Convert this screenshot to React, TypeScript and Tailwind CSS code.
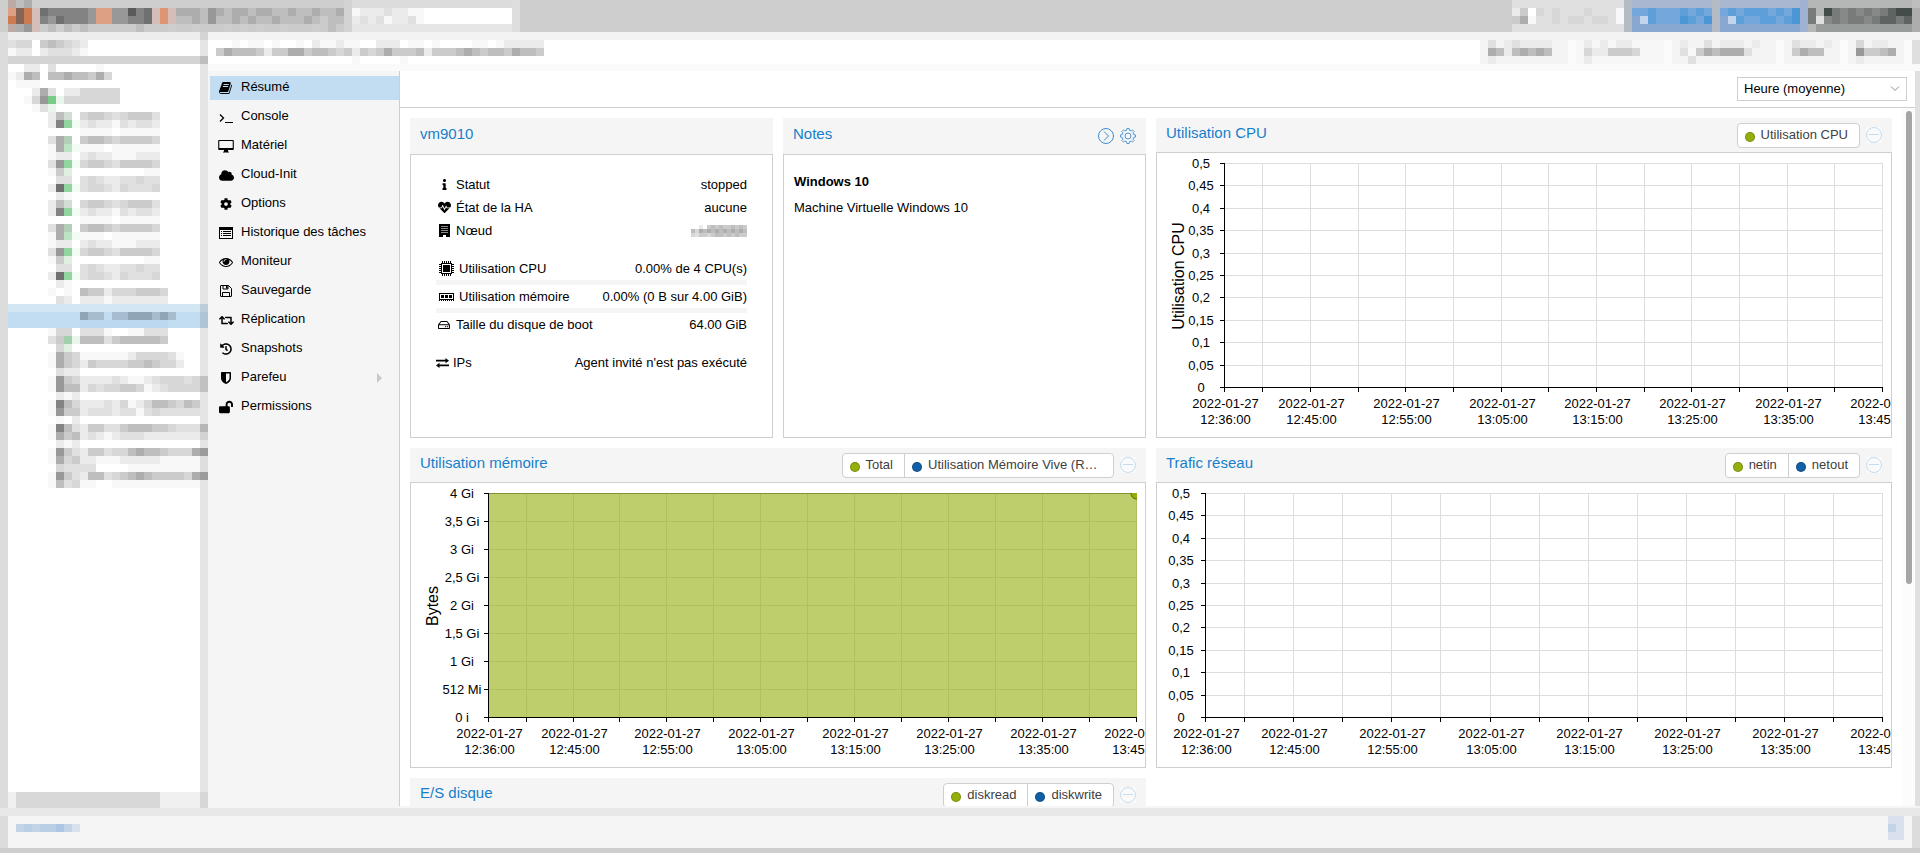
import type { ReactNode } from 'react';
import { FaCloud, FaCog, FaHeartbeat, FaHistory, FaInfo, FaLockOpen, FaRegHdd, FaRetweet } from 'react-icons/fa';

// One character per mosaic cell, '.' is left empty
const palette: Record<string, string> = {
  '0': '#ffffff', '1': '#f8f8f8', '2': '#ebebeb', '3': '#e0e0e0', '4': '#d7d7d7', '5': '#cbcbcb',
  '6': '#bebebe', '7': '#adadad', '8': '#989898', '9': '#838383', a: '#707070', b: '#5a5a5a',
  G: '#79cb88', g: '#92d5a0', h: '#d3dcd5', j: '#b3cfb8', k: '#bde3c4', l: '#dff0e2', m: '#eaf5ec', n: '#f3fbf5', q: '#a3d0ab',
  o: '#dea085', O: '#cd7c52', p: '#836657', P: '#d5beb7', r: '#e09572', R: '#bdaaa4',
  S: '#d3e6f3', s: '#c2dcf1', t: '#90a5b5', T: '#a7bccf', u: '#bbd8f0',
  A: '#a9b7d1', B: '#5c9fd9', C: '#74a7dc', D: '#88a8d2', E: '#c3d4ed', F: '#4b97d6',
  v: '#b5b7b6', w: '#989c9a', x: '#777c7a', y: '#868988', z: '#5d6462', Z: '#434c49',
  c: '#c3d4e7', d: '#adc6e4', e: '#b8cfe6', f: '#dae1ee',
};

function Mosaic({ rows, cell = 8 }: { rows: string[]; cell?: number }) {
  const cols = Math.max(...rows.map((r) => r.length));
  return (
    <svg width={cols * cell} height={rows.length * cell} shapeRendering="crispEdges" className="block shrink-0" aria-hidden="true">
      {rows.map((row, y) =>
        [...row].map((ch, x) =>
          palette[ch] ? <rect key={`${x}-${y}`} x={x * cell} y={y * cell} width={cell} height={cell} fill={palette[ch]} /> : null
        )
      )}
    </svg>
  );
}

const guests = [
  '.....26h.4554345553',
  '.....29gn2322132332',
  '.........1111011111',
  '.....37j.5665455554',
  '.....17kn1110111111',
  '.....122.2322111222',
  '.....38gn4554355554',
  '.....15l.0000000011',
  '......33.3432233433',
  '.....2agn3443243334',
  '......21.',
];

const treeRows = [
  '..22.3.....1',
  '1276.66766574',
  '.111',
  '...273.2244444',
  '..148Gm4444444',
  '...13m',
  ...guests,
  ...guests,
  '.....101.65524445554',
  '......32.22212222222',
  'SSSSSSSSSSSSSSSSSSSSSSSSS',
  'ssssssssstTTsTTtttTtTssss',
  'sssssssssuuuuuuuuuuusssss',
  '.....144.33310011333',
  '.....35qm66635666665',
  '......4l.',
  '.....17541111112444431',
  '.....17542544445565442',
  '......322',
  '.....18542222321123444344',
  '.....18662434455412344444',
  '......212',
  '.....1964222324124665465',
  '.....1855233323313433333',
  '......1.2',
  '.....19632553356665543335',
  '.....17562321233322222222',
  '......212',
  '.....18532553446766544477',
  '.....17452211122222111111',
  '......4333300001111111111',
  '.....18532663456765555477',
  '.....16341100111111111110',
];

const brand = [
  'R67...........',
  'opOPa999998oo88b9aPrP777687677677667667667',
  'OpOP98a9998oo8899aPrP667686676766766676566',
  'R78P56.6565555556555.55.555.5.5.55.555.565',
];

/* ---- icons ---- */

function BookIcon() {
  return (
    <svg viewBox="0 0 1792 1792" className="size-3.5" fill="currentColor">
      <path d="M1639 478q40 57 18 129l-275 906q-19 64-76.5 107.5t-122.5 43.5h-923q-77 0-148.5-53.5t-99.5-131.5q-24-67-2-127 0-4 3-27t4-37q1-8-3-21.5t-3-19.5q2-11 8-21t16.5-23.5 16.5-23.5q23-38 45-91.5t30-91.5q3-10 .5-30t-.5-28q3-11 17-28t17-23q21-36 42-92t25-90q1-9-2.5-32t.5-28q4-13 22-30.5t22-22.5q19-26 42.5-84.5t27.5-96.5q1-8-3-25.5t-2-26.5q2-8 9-18t18-23 17-21q8-12 16.5-30.5t15-35 16-36 19.5-32 26.5-23.5 36-11.5 47.5 5.5l-1 3q38-9 51-9h761q74 0 114 56t18 130l-274 906q-36 119-71.5 153.5t-128.5 34.5h-869q-27 0-38 15-11 16-1 43 24 70 144 70h923q29 0 56-15.5t35-41.5l300-987q7-22 5-57 38 15 59 43zm-1064 2q-4 13 2 22.5t20 9.5h608q13 0 25.5-9.5t16.5-22.5l21-64q4-13-2-22.5t-20-9.5h-608q-13 0-25.5 9.5t-16.5 22.5zm-83 256q-4 13 2 22.5t20 9.5h608q13 0 25.5-9.5t16.5-22.5l21-64q4-13-2-22.5t-20-9.5h-608q-13 0-25.5 9.5t-16.5 22.5z" />
    </svg>
  );
}

function TerminalIcon() {
  return (
    <svg viewBox="0 0 14 12" className="mt-0.5 h-3 w-3.5" fill="none" stroke="currentColor">
      <path d="M1 2.500L4.500 6 1 9.500" strokeWidth="1.300" />
      <path d="M6 10.500h8" />
    </svg>
  );
}

function DesktopIcon() {
  return (
    <svg viewBox="0 0 16 14" className="h-3.5 w-4 shrink-0" fill="currentColor">
      <path fillRule="evenodd" d="M1 1h14a.8.8 0 0 1 .8.8v8.400a.8.8 0 0 1-.8.8h-5v1.300l1 .7v.5H5v-.5l1-.7V11H1a.8.8 0 0 1-.8-.8V1.800A.8.8 0 0 1 1 1zm.3 1v7h13.400V2z" />
    </svg>
  );
}

function ListIcon() {
  return (
    <svg viewBox="0 0 14 12" className="h-3 w-3.5" fill="currentColor" shapeRendering="crispEdges">
      <path fillRule="evenodd" d="M0 0h14v12H0zM1 3v8h12V3z" />
      <path d="M2 4h1v1H2zM4 4h8v1H4zM2 6h1v1H2zM4 6h8v1H4zM2 8h1v1H2zM4 8h8v1H4z" />
    </svg>
  );
}

function EyeIcon() {
  return (
    <svg viewBox="0 0 1792 1792" className="size-3.5" fill="currentColor">
      <path d="M1664 960q-152-236-381-353 61 104 61 225 0 185-131.500 316.500t-316.500 131.500-316.500-131.500-131.500-316.500q0-121 61-225-229 117-381 353 133 205 333.500 326.500t434.500 121.500 434.500-121.500 333.500-326.500zm-720-384q0-20-14-34t-34-14q-125 0-214.500 89.500t-89.500 214.500q0 20 14 34t34 14 34-14 14-34q0-86 61-147t147-61q20 0 34-14t14-34zm848 384q0 34-20 69-140 230-376.500 368.500t-499.500 138.500-499.500-139-376.500-368q-20-35-20-69t20-69q140-229 376.500-368t499.500-139 499.500 139 376.500 368q20 35 20 69z" />
    </svg>
  );
}

function FloppyIcon() {
  return (
    <svg viewBox="0 0 12 12" className="size-3" fill="none" stroke="currentColor">
      <path d="M.5 1Q.5.5 1 .5h7.500l3 3V11q0 .5-.5.500H1q-.5 0-.5-.5zM2.500 11.500v-4h7v4M3 .5V4h5V.5" />
      <path d="M6 1h1.500v2.500H6z" fill="currentColor" stroke="none" />
    </svg>
  );
}

function ShieldIcon() {
  return (
    <svg viewBox="0 0 10 12" className="h-3 w-2.5" fill="currentColor">
      <path fillRule="evenodd" d="M0 .8Q0 0 .8 0h8.400q.8 0 .8.800V6q0 4-5 6-5-2-5-6zM5 1.500v8.800Q8.500 8.500 8.500 6V1.500z" />
    </svg>
  );
}

function BuildingIcon() {
  return (
    <svg viewBox="0 0 11 13" className="h-[13px] w-[11px]" shapeRendering="crispEdges">
      <path d="M0 0h11v13H0z" fill="currentColor" />
      <path d="M2 2h7v1H2zM2 4h7v1H2zM2 6h7v1H2zM2 8h7v1H2z" fill="#8a8a8a" />
      <path d="M4 11h3v2H4z" fill="#fff" />
    </svg>
  );
}

function ChipIcon() {
  return (
    <svg viewBox="0 0 15 15" className="size-[15px]" fill="currentColor" shapeRendering="crispEdges">
      <path d="M3 0h1v2H3zM5 0h1v2H5zM7 0h1v2H7zM9 0h1v2H9zM11 0h1v2h-1zM3 13h1v2H3zM5 13h1v2H5zM7 13h1v2H7zM9 13h1v2H9zM11 13h1v2h-1zM0 3h2v1H0zM0 5h2v1H0zM0 7h2v1H0zM0 9h2v1H0zM0 11h2v1H0zM13 3h2v1h-2zM13 5h2v1h-2zM13 7h2v1h-2zM13 9h2v1h-2zM13 11h2v1h-2z" />
      <path fillRule="evenodd" d="M2 2h11v11H2zM3 3v9h9V3z" />
      <path d="M4 4h7v7H4z" />
    </svg>
  );
}

function MemoryIcon() {
  return (
    <svg viewBox="0 0 15 8" className="h-2 w-[15px]" fill="currentColor" shapeRendering="crispEdges">
      <path fillRule="evenodd" d="M0 0h15v7H0zM1 1v5h13V1z" />
      <path d="M2 2h3v3H2zM6 2h3v3H6zM10 2h3v3h-3zM0 7h1v1H0zM2 7h1v1H2zM4 7h1v1H4zM6 7h1v1H6zM8 7h1v1H8zM10 7h1v1h-1zM12 7h1v1h-1zM14 7h1v1h-1z" />
    </svg>
  );
}

function ExchangeIcon() {
  return (
    <svg viewBox="0 0 13 10" className="h-2.5 w-[13px]" fill="currentColor">
      <path d="M0 1.700h9.500V0L13 2.700 9.500 5.200V3.500H0zM13 6.500H3.500V4.800L0 7.500 3.500 10V8.300H13z" />
    </svg>
  );
}

function ExpandIcon() {
  return (
    <svg viewBox="0 0 16 16" className="size-4" fill="none" stroke="#3f8fd0">
      <circle cx="8" cy="8" r="7.500" />
      <path d="M6 3.500L10.500 8 6 12.500" />
    </svg>
  );
}

function GearIcon() {
  const teeth = Array.from({ length: 8 }, (_, i) => {
    const point = (deg: number, r: number) => {
      const a = ((i * 45 + deg) * Math.PI) / 180;
      return `${(8 + r * Math.cos(a)).toFixed(2)} ${(8 + r * Math.sin(a)).toFixed(2)}`;
    };
    return `${point(-13, 6)} L${point(-9, 7.5)} L${point(9, 7.5)} L${point(13, 6)}`;
  });
  return (
    <svg viewBox="0 0 16 16" className="size-4" fill="none" stroke="#4f98d6">
      <path d={`M${teeth.join(' L')} Z`} />
      <circle cx="8" cy="8" r="3" />
    </svg>
  );
}

function CollapseIcon() {
  return (
    <svg viewBox="0 0 16 16" className="size-4 bg-[#fafafa]" fill="none" stroke="#c5ddf0">
      <circle cx="8" cy="8" r="7.500" />
      <path d="M3 7.500h10" />
    </svg>
  );
}

/* ---- panels ---- */

const menu: { icon: ReactNode; label: string; more?: boolean }[] = [
  { icon: <BookIcon />, label: 'Résumé' },
  { icon: <TerminalIcon />, label: 'Console' },
  { icon: <DesktopIcon />, label: 'Matériel' },
  { icon: <FaCloud className="size-[15px]" />, label: 'Cloud-Init' },
  { icon: <FaCog className="size-3" />, label: 'Options' },
  { icon: <ListIcon />, label: 'Historique des tâches' },
  { icon: <EyeIcon />, label: 'Moniteur' },
  { icon: <FloppyIcon />, label: 'Sauvegarde' },
  { icon: <FaRetweet className="size-[15px]" />, label: 'Réplication' },
  { icon: <FaHistory className="size-3" />, label: 'Snapshots' },
  { icon: <ShieldIcon />, label: 'Parefeu', more: true },
  { icon: <FaLockOpen className="size-3.5" />, label: 'Permissions' },
];

function StatusRow({ icon, iconClass = 'w-4 justify-center', label, children }: { icon: ReactNode; iconClass?: string; label: string; children: ReactNode }) {
  return (
    <div className="flex h-[23px] items-center leading-[23px]">
      <span className={`mr-1 flex shrink-0 ${iconClass}`}>{icon}</span>
      <span>{label}</span>
      <span className="ml-auto">{children}</span>
    </div>
  );
}

type Serie = { name: string; color: string; wide?: boolean };

function ChartCard({ title, series, children }: { title: string; series: Serie[]; children?: ReactNode }) {
  return (
    <section className="min-w-0">
      <div className="flex h-[34px] items-start bg-[#f5f5f5] px-2.5 pt-[5px]">
        <h2 className="text-[15px] leading-5 text-[#157fcc]">{title}</h2>
        <div className="ml-auto flex h-[25px] divide-x divide-[#cfcfcf] rounded-sm border border-[#cfcfcf] bg-white text-[#404040]">
          {series.map((s) => (
            <button key={s.name} className="flex items-start pr-[11px] pl-[7px]">
              <span className={`mt-2 mr-1.5 size-2.5 rounded-full border border-black/20 ${s.color}`} />
              <span className={`leading-[22px] ${s.wide ? 'w-[174px] text-left' : ''}`}>{s.name}</span>
            </button>
          ))}
        </div>
        <button className="mt-1 ml-1.5" aria-label="Réduire"><CollapseIcon /></button>
      </div>
      <div className="overflow-hidden border border-[#cfcfcf] bg-white">{children}</div>
    </section>
  );
}

const minutes = [0, 4, 9, 14, 19, 24, 29, 34, 39, 44, 49, 54, 59, 64, 69];
const times: Record<number, string> = {
  0: '12:36:00', 9: '12:45:00', 19: '12:55:00', 29: '13:05:00', 39: '13:15:00', 49: '13:25:00', 59: '13:35:00', 69: '13:45:00',
};

type ChartProps = { id: string; left: number; right: number; labelX: number; labels: string[]; axis?: string; axisX?: number; filled?: boolean };

function Chart({ id, left, right, labelX, labels, axis, axisX, filled }: ChartProps) {
  const top = 10;
  const bottom = 234;
  const xAt = (m: number) => Math.round(left + ((right - left) * m) / 69) + 0.5;
  const yAt = (i: number) => Math.round(top + ((bottom - top) * i) / (labels.length - 1)) + 0.5;
  return (
    <svg viewBox="0 0 734 284" className="block w-full text-[13px]">
      <clipPath id={id}>
        <rect x={left} y={top} width={right - left + 1} height={bottom - top} />
      </clipPath>
      {labels.map((l, i) => (
        <g key={l}>
          <path d={`M${left} ${yAt(i)}H${right + 1}`} stroke="#dddddd" />
          <path d={`M${left - 4} ${yAt(i)}H${left}`} stroke="#000" />
          <text x={labelX} y={yAt(i) + 4} textAnchor="middle">{l}</text>
        </g>
      ))}
      {minutes.map((m) => (
        <g key={m}>
          <path d={`M${xAt(m)} ${top}V${bottom}`} stroke="#dddddd" />
          <path d={`M${xAt(m)} ${bottom}v5`} stroke="#000" />
          {times[m] && (
            <text y={bottom + 21} textAnchor="middle">
              <tspan x={xAt(m) + 1}>2022-01-27</tspan>
              <tspan x={xAt(m) + 1} dy="16">{times[m]}</tspan>
            </text>
          )}
        </g>
      ))}
      {filled && (
        <g clipPath={`url(#${id})`}>
          <rect x={left} y={top} width={right - left + 1} height={bottom - top} fill="#94ae0a" fillOpacity="0.6" />
          <path d={`M${left} ${top + 0.5}H${right + 1}`} stroke="#7f9431" />
          <circle cx={right + 0.5} cy={top + 0.5} r="5.500" fill="#94ae0a" stroke="#566606" />
        </g>
      )}
      <path d={`M${left + 0.5} ${top}V${bottom + 0.5}H${right + 1}`} fill="none" stroke="#000" />
      {axis && (
        <text transform={`translate(${axisX} 123) rotate(-90)`} textAnchor="middle" fontSize="16">{axis}</text>
      )}
    </svg>
  );
}

const ratio = ['0,5', '0,45', '0,4', '0,35', '0,3', '0,25', '0,2', '0,15', '0,1', '0,05', '0'];
const bytes = ['4 Gi', '3,5 Gi', '3 Gi', '2,5 Gi', '2 Gi', '1,5 Gi', '1 Gi', '512 Mi', '0 i'];
const green = 'bg-[#94ae0a]';
const blue = 'bg-[#115fa6]';

export default function App() {
  return (
    <div className="flex h-screen flex-col overflow-hidden bg-[#f5f5f5] font-['Liberation_Sans',Arial,sans-serif] text-[13px] text-black">
      <header className="flex h-8 shrink-0 bg-[#cecece] pl-2">
        <Mosaic rows={brand} />
        <div className="w-2 bg-[#d3d3d3]" />
        <label className="flex h-8 w-40 border-y-8 border-t-[#dcdcdc] border-b-[#e6e6e6] bg-white">
          <Mosaic rows={['122232211', '232312231']} />
          <input type="text" aria-label="Recherche" className="min-w-0 flex-1 outline-none" />
        </label>
        <div className="w-2 bg-[#dedede]" />
        <div className="ml-auto flex">
          <Mosaic rows={['33333333333333', '25043433343331', '57133434434431', '33333333333333']} />
          <div className="w-2 bg-[#b3bbc5]" />
          <button><Mosaic rows={['AAAAAAAAAA', 'CCBCCCBCBC', 'DEBCCCFBCF', 'DDDDDDDDDD']} /></button>
          <div className="w-2 bg-[#b5bbc5]" />
          <button><Mosaic rows={['AAAAAAAAAA', 'CBCBBBCBCF', 'DEBCCBBCBF', 'DDDDDDDDDD']} /></button>
          <div className="w-2 bg-[#9fb2d2]" />
          <button><Mosaic rows={['vvvvvvvvvvvvv6', 'xvZxyxyxyxzZZ7', 'x3yxyxxyxzzxz7', 'vwwwwwwwwwwww7']} /></button>
        </div>
      </header>

      <div className="flex min-h-0 flex-1">
        <div className="w-2 shrink-0 bg-[#dcdcdc]" />
        <aside className="flex w-50 shrink-0 flex-col bg-white">
          <div className="h-2 shrink-0 bg-[#ededed]" />
          <Mosaic rows={['3440565432', '1220233321']} />
          <div className="h-2 shrink-0 bg-[#d4d4d4]" />
          <Mosaic rows={treeRows} />
          <div className="mt-auto flex h-4 shrink-0 bg-[#f0f0f0] pl-2">
            <div className="w-36 bg-[#d8d8d8]" />
          </div>
        </aside>
        {/* splitter, laid over the last cells of the tree */}
        <div className="z-10 -ml-2 w-2 shrink-0 bg-black/10" />

        <div className="flex min-w-0 flex-1 flex-col">
          <div className="h-2 shrink-0 bg-[#f3f3f3]" />
          <div className="flex h-6 shrink-0 bg-white pl-2">
            <Mosaic
              rows={[
                '..1.11.1..1.211211..222.11.1....11.122222',
                '57666525577566545254575556255567656657665',
                '.................1.....1',
              ]}
            />
            <div className="ml-auto flex gap-2 bg-[#fbfbfb] pr-2">
              <button className="bg-[#f4f4f4]"><Mosaic rows={['.3.232222..', '.76267676..', '.2.........']} /></button>
              <button className="bg-[#f7f7f7]"><Mosaic rows={['.2.2.22....', '.4225554...', '.2.........']} /></button>
              <button className="bg-[#f4f4f4]"><Mosaic rows={['.2..3.222.2..', '.315767773...', '..3..........']} /></button>
              <button className="bg-[#f4f4f4]"><Mosaic rows={['.322.2.', '.5766..', '.......']} /></button>
              <button className="bg-[#f4f4f4]"><Mosaic rows={['.4.22..', '.85567.', '.2.....']} /></button>
            </div>
            <div className="w-2 bg-[#dfdfdf]" />
          </div>
          <div className="h-[7px] shrink-0 bg-[#fafafa]" />

          <div className="flex min-h-0 flex-1 pb-0.5 pl-0.5">
            <nav className="flex w-[190px] shrink-0 flex-col gap-[5px] border-r border-[#cecece] bg-[#f5f5f5] pt-[5px]">
              {menu.map((item, i) => (
                <a key={item.label} href="#" className={`flex h-6 items-center pl-2 ${i === 0 ? 'bg-[#c2ddf2]' : ''}`}>
                  <span className="flex w-4 justify-center">{item.icon}</span>
                  <span className="ml-[7px] self-start leading-[21px]">{item.label}</span>
                  {item.more && (
                    <svg viewBox="0 0 5 10" className="mr-[17px] ml-auto h-2.5 w-[5px]" fill="#c8c8c8"><path d="M0 0l5 5-5 5z" /></svg>
                  )}
                </a>
              ))}
            </nav>

            <main className="flex min-w-0 flex-1 flex-col bg-white">
              <div className="flex h-[37px] shrink-0 items-center justify-end border-b border-[#cecece] pr-2">
                <div className="relative">
                  <select aria-label="Période" className="block h-6 w-[170px] appearance-none border border-[#cfcfcf] bg-white pl-1.5 leading-[22px]">
                    <option>Heure (moyenne)</option>
                  </select>
                  <svg viewBox="0 0 10 6" className="pointer-events-none absolute top-[9px] right-[7px] h-1.5 w-2.5" fill="none" stroke="#909090">
                    <path d="M1 .5l4 4 4-4" />
                  </svg>
                </div>
              </div>

              <div className="flex min-h-0 flex-1">
                <div className="grid min-w-0 flex-1 grid-cols-2 content-start gap-2.5 overflow-hidden pt-2.5 pl-2.5">
                  <div className="grid min-w-0 grid-cols-2 gap-2.5">
                    <section className="flex min-w-0 flex-col">
                      <div className="h-9 shrink-0 bg-[#f5f5f5] px-2.5 pt-1.5">
                        <h2 className="text-[15px] leading-5 text-[#157fcc]">vm9010</h2>
                      </div>
                      <div className="flex-1 border border-[#cfcfcf] px-[25px] pt-[18px]">
                        <StatusRow icon={<FaInfo className="size-[11px]" />} label="Statut">stopped</StatusRow>
                        <StatusRow icon={<FaHeartbeat className="size-[13px]" />} label="État de la HA">aucune</StatusRow>
                        <StatusRow icon={<BuildingIcon />} label="Nœud">
                          <Mosaic cell={4} rows={['..2.5656556565', '64767676767676', '43554566565655']} />
                        </StatusRow>
                        <div className="h-[15px]" />
                        <StatusRow icon={<ChipIcon />} iconClass="ml-[3px] w-4" label="Utilisation CPU">0.00% de 4 CPU(s)</StatusRow>
                        <div className="h-[5px] bg-[#f5f5f5]" />
                        <StatusRow icon={<MemoryIcon />} iconClass="ml-[3px] w-4" label="Utilisation mémoire">0.00% (0 B sur 4.00 GiB)</StatusRow>
                        <div className="h-[5px] bg-[#f5f5f5]" />
                        <StatusRow icon={<FaRegHdd className="size-3" />} label="Taille du disque de boot">64.00 GiB</StatusRow>
                        <div className="h-[15px]" />
                        <StatusRow icon={<ExchangeIcon />} iconClass="w-[13px]" label="IPs">Agent invité n'est pas exécuté</StatusRow>
                      </div>
                    </section>

                    <section className="flex min-w-0 flex-col">
                      <div className="flex h-9 shrink-0 items-start bg-[#f5f5f5] px-2.5 pt-1.5">
                        <h2 className="text-[15px] leading-5 text-[#157fcc]">Notes</h2>
                        <div className="mt-1 ml-auto flex gap-1.5">
                          <button aria-label="Replier"><ExpandIcon /></button>
                          <button aria-label="Modifier"><GearIcon /></button>
                        </div>
                      </div>
                      <div className="flex-1 border border-[#cfcfcf] px-2.5 pt-[18px] leading-[17px]">
                        <p className="mb-[9px] font-bold">Windows 10</p>
                        <p>Machine Virtuelle Windows 10</p>
                      </div>
                    </section>
                  </div>

                  <ChartCard title="Utilisation CPU" series={[{ name: 'Utilisation CPU', color: green }]}>
                    <Chart id="cpu" left={67} right={725} labelX={44} labels={ratio} axis="Utilisation CPU" axisX={27} />
                  </ChartCard>

                  <ChartCard
                    title="Utilisation mémoire"
                    series={[{ name: 'Total', color: green }, { name: 'Utilisation Mémoire Vive (R…', color: blue, wide: true }]}
                  >
                    <Chart id="mem" left={77} right={725} labelX={51} labels={bytes} axis="Bytes" axisX={27} filled />
                  </ChartCard>

                  <ChartCard title="Trafic réseau" series={[{ name: 'netin', color: green }, { name: 'netout', color: blue }]}>
                    <Chart id="net" left={48} right={725} labelX={24} labels={ratio} />
                  </ChartCard>

                  <ChartCard title="E/S disque" series={[{ name: 'diskread', color: green }, { name: 'diskwrite', color: blue }]} />
                </div>
                <div className="ml-2.5 w-[13px] shrink-0 bg-[#fcfcfc] pt-[3px] pl-1">
                  <div className="h-[68%] w-1.5 rounded-full bg-[#a5a5a5]" />
                </div>
              </div>
            </main>
            <div className="w-[5px] shrink-0 bg-[#e0e0e0]" />
          </div>
        </div>
      </div>

      <div className="h-2 shrink-0 bg-[#e8e8e8]" />
      <footer className="flex h-8 shrink-0 items-start justify-between border-x-8 border-x-[#dcdcdc] px-2">
        <div className="pt-2"><Mosaic rows={['ceceedcf']} /></div>
        <Mosaic rows={['ff', 'cf', 'ff']} />
      </footer>
      <div className="h-[5px] shrink-0 bg-[#cecece]" />
    </div>
  );
}
